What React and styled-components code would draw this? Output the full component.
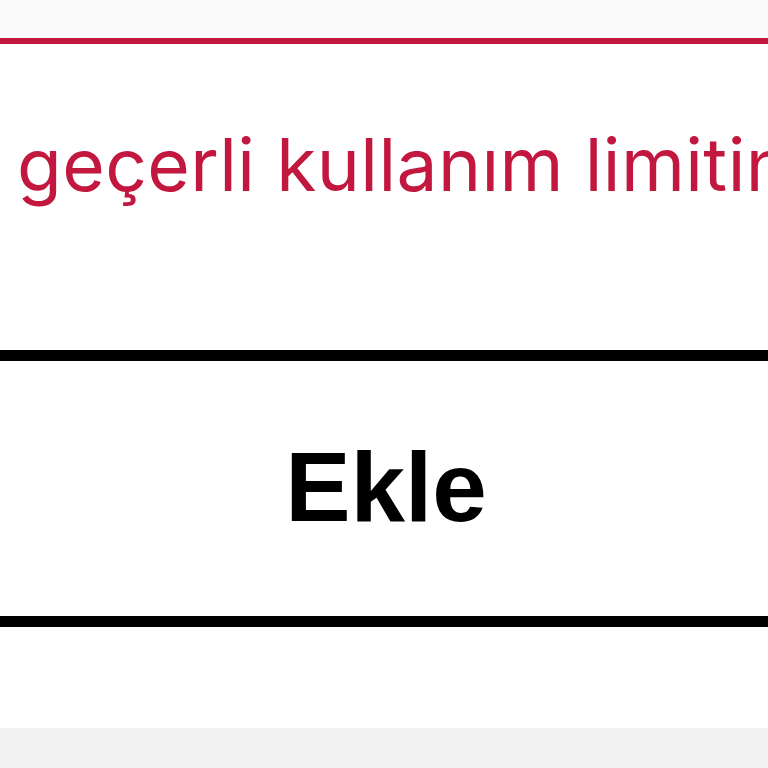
import React from "react";
import styled, { createGlobalStyle } from "styled-components";

const Global = createGlobalStyle`
  html, body { margin: 0; padding: 0; background: #f2f2f2; }
  body { font-family: "Inter", "Liberation Sans", sans-serif; }
  #root { width: 768px; height: 768px; overflow: hidden; }
`;

const Screen = styled.div`
  display: flex;
  flex-direction: column;
  width: 768px;
  height: 768px;
  background: #f2f2f2;
`;

const TopBar = styled.div`
  height: 38px;
  background: #fafafa;
  border-bottom: 6px solid #c1173f;
  flex: none;
`;

const Notice = styled.div`
  height: 306px;
  background: #fff;
  flex: none;
  overflow: hidden;
  padding: 77px 0 0 17px;
  box-sizing: border-box;
`;

const NoticeText = styled.p`
  margin: 0;
  white-space: nowrap;
  color: #c2173e;
  font-family: "Inter", "Liberation Sans", sans-serif;
  font-size: 73px;
  line-height: 88px;
  font-weight: 400;
  letter-spacing: 0.4px;
`;

const AddButton = styled.button`
  display: flex;
  align-items: center;
  justify-content: center;
  height: 277px;
  width: 100%;
  flex: none;
  margin: 0;
  padding: 0 0 2px 4px;
  background: #fff;
  border: none;
  border-top: 11px solid #000;
  border-bottom: 11px solid #000;
  box-sizing: border-box;
  color: #000;
  font-family: "Liberation Sans", "Inter", sans-serif;
  font-size: 98px;
  font-weight: 700;
  cursor: pointer;
`;

const Footer = styled.div`
  height: 101px;
  background: #fff;
  flex: none;
`;

export default function App() {
  return (
    <>
      <Global />
      <Screen>
        <TopBar />
        <Notice>
          <NoticeText>geçerli kullanım limitini aştınız</NoticeText>
        </Notice>
        <AddButton>Ekle</AddButton>
        <Footer />
      </Screen>
    </>
  );
}
